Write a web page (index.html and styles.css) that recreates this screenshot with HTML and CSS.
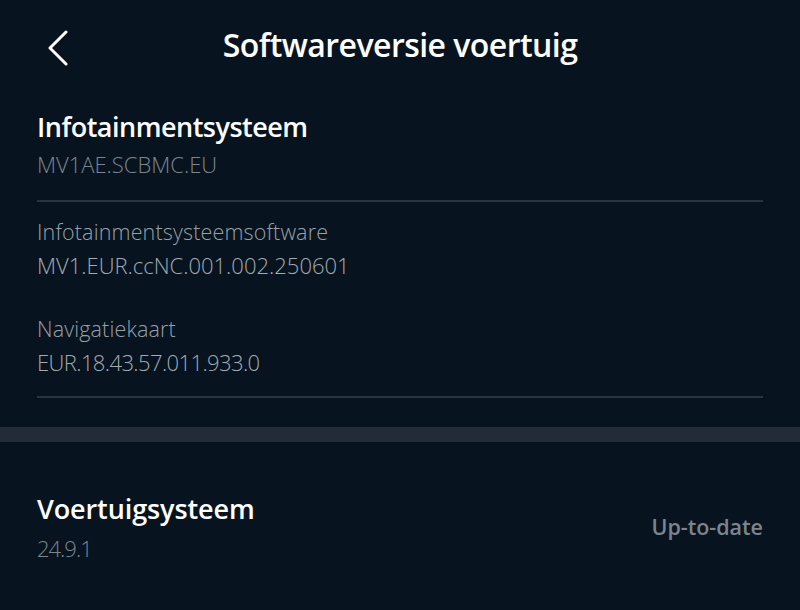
FILE: index.html
```html
<!DOCTYPE html>
<html lang="nl">
<head>
<meta charset="utf-8">
<title>Softwareversie voertuig</title>
<link rel="stylesheet" href="styles.css">
</head>
<body>
<div class="screen">
  <header class="topbar">
    <button class="back" aria-label="Terug">
      <svg width="22" height="36" viewBox="0 0 22 36"><path d="M19 2 L3 18 L19 34" fill="none" stroke="#ffffff" stroke-width="3" stroke-linecap="round" stroke-linejoin="round"/></svg>
    </button>
    <h1 class="title">Softwareversie voertuig</h1>
    <span></span>
  </header>

  <section class="section info">
    <h2 class="heading">Infotainmentsysteem</h2>
    <div class="sub">MV1AE.SCBMC.EU</div>
    <div class="divider"></div>
    <div class="item">
      <div class="label">Infotainmentsysteemsoftware</div>
      <div class="value">MV1.EUR.ccNC.001.002.250601</div>
    </div>
    <div class="item">
      <div class="label">Navigatiekaart</div>
      <div class="value digits">EUR.18.43.57.011.933.0</div>
    </div>
    <div class="divider last"></div>
  </section>

  <div class="band"></div>

  <section class="section row">
    <div class="rowtext">
      <h2 class="heading">Voertuigsysteem</h2>
      <div class="sub digits-tight">24.9.1</div>
    </div>
    <div class="status">Up-to-date</div>
  </section>
</div>
</body>
</html>
```

FILE: styles.css
```css
html, body {
  margin: 0;
  padding: 0;
  background: #07141f;
}
body {
  font-family: "Open Sans", "Noto Sans", sans-serif;
  color: #ffffff;
  width: 800px;
  height: 610px;
  overflow: hidden;
}
.screen {
  display: flex;
  flex-direction: column;
}
.topbar {
  display: grid;
  grid-template-columns: 1fr auto 1fr;
  align-items: center;
  height: 96px;
}
.back {
  justify-self: start;
  margin-left: 47px;
  padding: 0;
  border: 0;
  background: none;
  display: flex;
}
.title {
  margin: -7px 0 0 0;
  font-size: 32px;
  font-weight: 600;
  letter-spacing: -0.55px;
  line-height: 40px;
}
.section {
  padding: 0 37px;
}
.heading {
  margin: 0;
  font-size: 27px;
  font-weight: 600;
  line-height: 36px;
  letter-spacing: -0.5px;
}
.info .heading {
  margin-top: 13px;
}
.row .heading {
  letter-spacing: -0.1px;
}
.sub {
  font-size: 22px;
  font-weight: 300;
  line-height: 28px;
  color: #7c858e;
  margin-top: 5px;
}
.divider {
  height: 2px;
  background: #29343e;
  margin-top: 22px;
}
.divider.last {
  margin-top: 20px;
}
.item {
  padding-top: 16px;
}
.item + .item {
  padding-top: 36px;
}
.label {
  font-size: 21.5px;
  font-weight: 300;
  line-height: 28px;
  color: #98a0a8;
  letter-spacing: 0.15px;
}
.value {
  font-size: 22px;
  font-weight: 300;
  line-height: 28px;
  color: #a3aab1;
  margin-top: 5px;
}
.digits {
  letter-spacing: -0.6px;
}
.digits-tight {
  letter-spacing: -1px;
}
.band {
  height: 15px;
  background: #212c36;
  margin-top: 29px;
}
.row {
  display: flex;
  align-items: center;
  justify-content: space-between;
  padding-top: 49px;
}
.row .sub {
  margin-top: 7px;
}
.status {
  font-size: 21.5px;
  font-weight: 600;
  line-height: 28px;
  color: #7c858e;
  letter-spacing: 0;
}
```
